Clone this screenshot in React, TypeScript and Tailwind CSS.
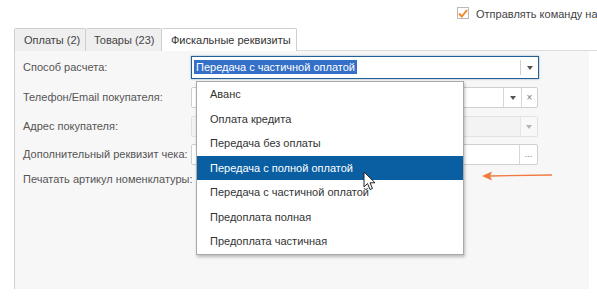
import React from "react";

const options = [
  "Аванс",
  "Оплата кредита",
  "Передача без оплаты",
  "Передача с полной оплатой",
  "Передача с частичной оплатой",
  "Предоплата полная",
  "Предоплата частичная",
];

const Caret = ({ light }: { light?: boolean }) => (
  <svg width="6" height="4" viewBox="0 0 6 4">
    <path d="M0 0 L6 0 L3 4 Z" fill={light ? "#b5b5b5" : "#555"} />
  </svg>
);

export default function App() {
  return (
    <div
      className="relative w-[597px] h-[301px] overflow-hidden bg-white text-[11px] text-[#444] whitespace-nowrap"
      style={{ fontFamily: "'Liberation Sans', Arial, sans-serif" }}
    >
      {/* top option */}
      <div className="flex h-[28px] items-start pl-[457px] pt-[7px]">
        <span className="flex h-[12px] w-[12px] shrink-0 items-center justify-center border border-[#b9b9b9] bg-white">
          <svg width="10" height="9" viewBox="0 0 10 9">
            <path d="M1 4.5 L3.8 7.5 L9 1" stroke="#f08a24" strokeWidth="2" fill="none" />
          </svg>
        </span>
        <span className="ml-[7px] -mt-[1px] text-[#444]">Отправлять команду на печать</span>
      </div>

      {/* tabs */}
      <div className="ml-[14px] flex h-[23px] items-stretch">
        <div className="flex w-[72px] items-center rounded-t-[2px] border border-b-0 border-[#cfcfcf] bg-[#efefef] pl-[9px] text-[#444]">
          Оплаты (2)
        </div>
        <div className="flex w-[76px] items-center rounded-t-[2px] border border-b-0 border-l-0 border-[#cfcfcf] bg-[#efefef] pl-[8px] text-[#444]">
          Товары (23)
        </div>
        <div className="flex w-[135px] items-center rounded-t-[2px] border border-b-0 border-l-0 border-[#cfcfcf] bg-white pl-[9px] text-[#333]">
          Фискальные реквизиты
        </div>
        <div className="flex-1 border-b border-[#dcdcdc]" />
      </div>

      {/* panel */}
      <div className="relative ml-[14px] h-[238px] w-[575px] border-l border-[#d0d0d0] bg-[#f7f7f7] pl-[8px] pt-[5px] text-[#555]">
        <div className="flex h-[23px] items-center">
          <div className="w-[168px]">Способ расчета:</div>
          <div className="flex h-[23px] w-[348px] items-center border border-[#235f93] bg-white shadow-[0_0_2px_rgba(35,95,147,0.5)]">
            <div className="flex-1 pl-[2px]">
              <span className="bg-[#3470c8] px-[2px] py-[1px] text-white">Передача с частичной оплатой</span>
            </div>
            <div className="flex h-[15px] w-[18px] items-center justify-center border-l border-[#d0d0d0]">
              <Caret />
            </div>
          </div>
        </div>

        <div className="mt-[8px] flex h-[21px] items-center">
          <div className="w-[168px]">Телефон/Email покупателя:</div>
          <div className="flex h-[21px] w-[347px] items-stretch rounded-[2px] border border-[#cfcfcf] bg-white">
            <div className="flex-1" />
            <div className="flex w-[18px] items-center justify-center border-l border-[#d6d6d6]">
              <Caret />
            </div>
            <div className="flex w-[16px] items-center justify-center border-l border-[#d6d6d6] text-[10px] text-[#777]">
              ×
            </div>
          </div>
        </div>

        <div className="mt-[8px] flex h-[21px] items-center">
          <div className="w-[168px]">Адрес покупателя:</div>
          <div className="flex h-[21px] w-[347px] items-stretch rounded-[2px] border border-[#e2e2e2] bg-[#f3f3f3]">
            <div className="flex-1" />
            <div className="flex w-[17px] items-center justify-center border-l border-[#e6e6e6] bg-[#f8f8f8]">
              <Caret light />
            </div>
          </div>
        </div>

        <div className="mt-[7px] flex h-[21px] items-center">
          <div className="w-[168px]">Дополнительный реквизит чека:</div>
          <div className="flex h-[21px] w-[347px] items-stretch rounded-[2px] border border-[#cfcfcf] bg-white">
            <div className="flex-1" />
            <div className="flex w-[18px] items-center justify-center border-l border-[#d6d6d6] text-[9px] text-[#777]">
              ...
            </div>
          </div>
        </div>

        <div className="mt-[4px] flex h-[20px] items-center">
          <div>Печатать артикул номенклатуры:</div>
        </div>

        {/* dropdown list */}
        <div className="absolute left-[181px] top-[30px] w-[268px] border border-[#a9a9a9] bg-white shadow-[1px_2px_3px_rgba(0,0,0,0.25)]">
          {options.map((o, i) => (
            <div
              key={o}
              className={
                i === 3
                  ? "flex h-[24.5px] items-center bg-[#0a5fa3] pl-[13px] text-white"
                  : "flex h-[24.5px] items-center pl-[13px] text-[#333]"
              }
            >
              {o}
            </div>
          ))}
        </div>

        {/* mouse pointer */}
        <svg className="absolute left-[348px] top-[120px]" width="13" height="20" viewBox="0 0 13 20">
          <path
            d="M1 1 L1 16 L4.5 12.5 L7 18.5 L9.5 17.5 L7 11.8 L12 11.8 Z"
            fill="white"
            stroke="#222"
            strokeWidth="1"
            strokeLinejoin="round"
          />
        </svg>

        {/* orange arrow */}
        <svg className="absolute left-[466px] top-[119px]" width="72" height="12" viewBox="0 0 72 12">
          <path d="M8 6 L71 5" stroke="#f07a3e" strokeWidth="1.3" />
          <path d="M1 6 L11 1.5 L9 6 L11 10.5 Z" fill="#f07a3e" />
        </svg>
      </div>
    </div>
  );
}
